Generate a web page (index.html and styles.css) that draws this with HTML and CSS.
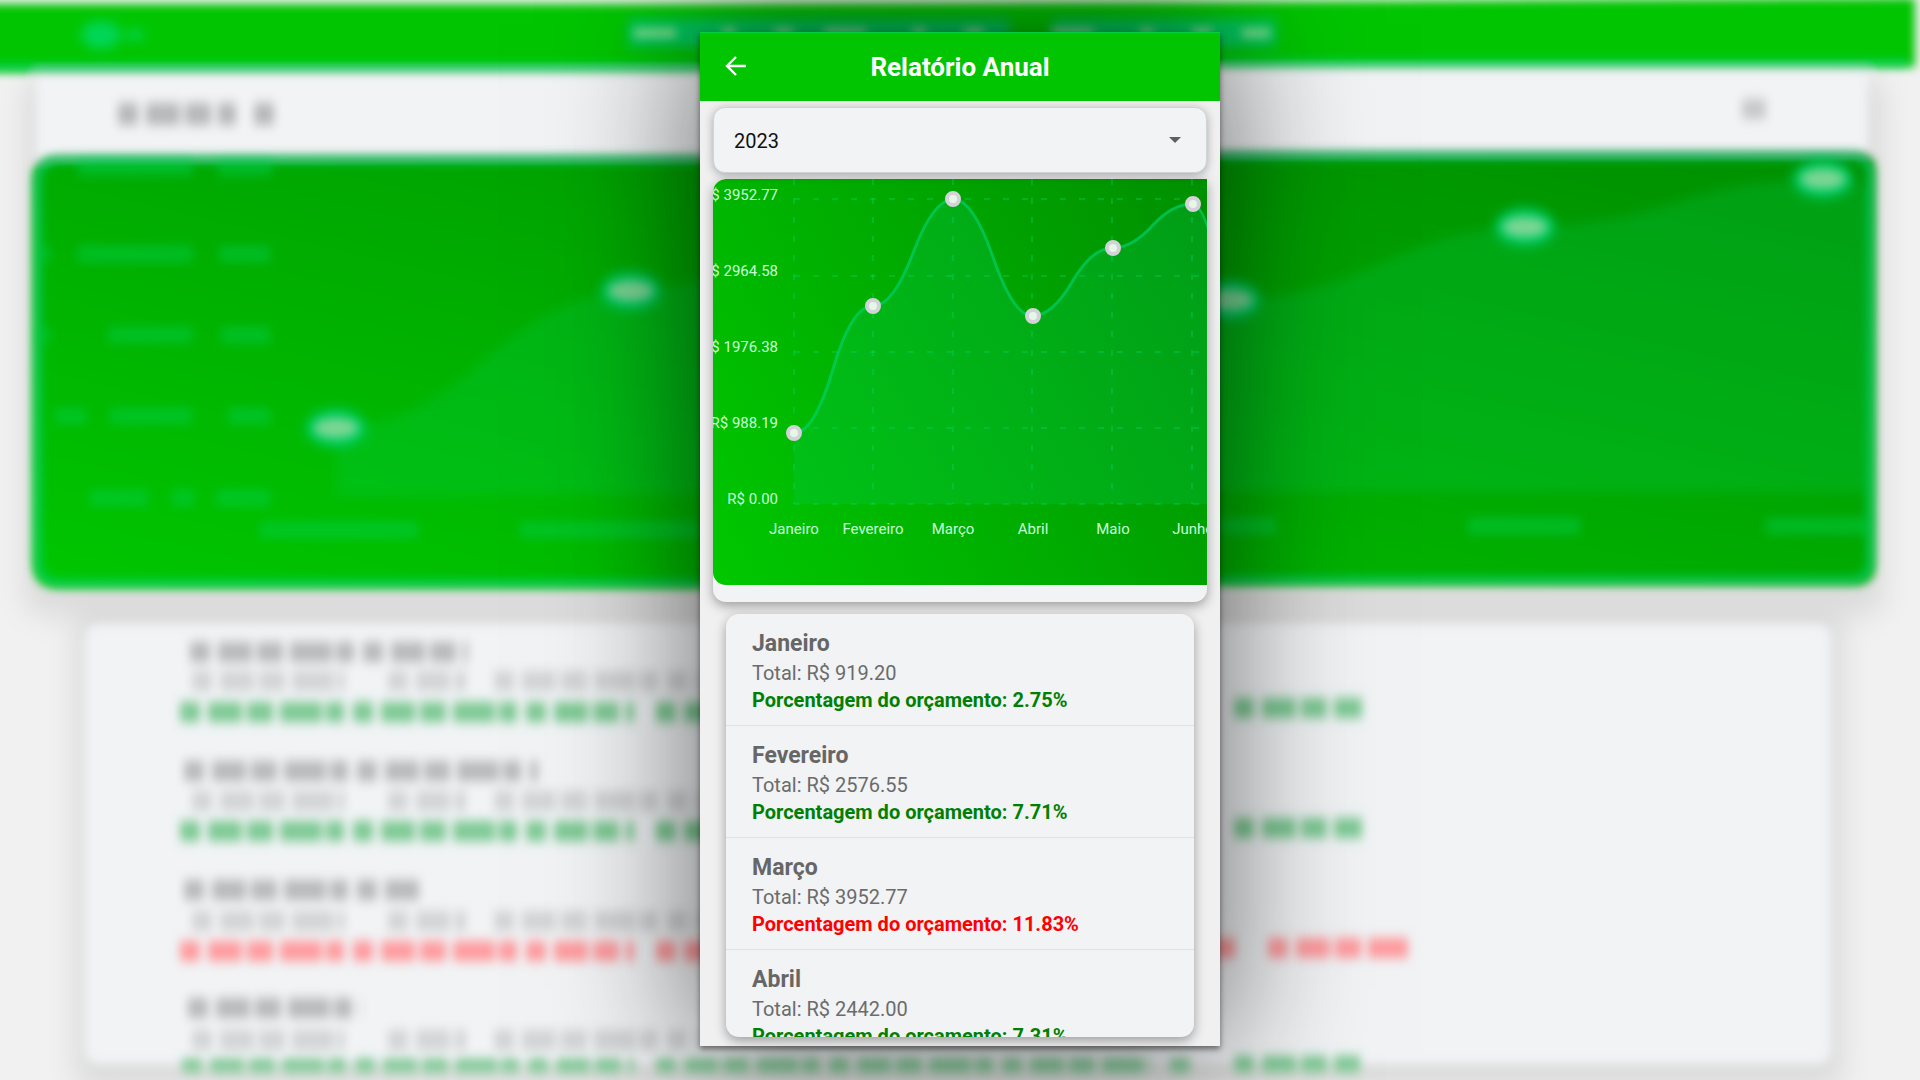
FILE: index.html
```html
<!DOCTYPE html>
<html lang="pt-BR">

<head>
  <meta charset="UTF-8">
  <meta name="viewport" content="width=device-width, initial-scale=1.0">
  <title>Relatório Anual</title>
  <link rel="stylesheet" href="styles.css">
</head>

<body>
  <!-- blurred backdrop -->
  <svg class="backdrop" viewBox="0 0 1920 1080" preserveAspectRatio="xMidYMid slice" aria-hidden="true">
    <defs>
      <linearGradient id="bgGreen" x1="0" y1="1" x2="1" y2="0">
        <stop offset="0" stop-color="#00c600" />
        <stop offset="1" stop-color="#008f00" />
      </linearGradient>
      <filter id="soft" x="-5%" y="-5%" width="110%" height="110%">
        <feGaussianBlur stdDeviation="5" />
      </filter>
      <filter id="softer" x="-5%" y="-5%" width="110%" height="110%">
        <feGaussianBlur stdDeviation="14" />
      </filter>
      <filter id="glow" x="-5%" y="-30%" width="110%" height="160%">
        <feGaussianBlur stdDeviation="6" />
      </filter>
      <filter id="words" x="-5%" y="-5%" width="110%" height="110%">
        <feGaussianBlur stdDeviation="5 6" />
      </filter>
      <clipPath id="listClip">
        <rect width="1920" height="1072" />
      </clipPath>
    </defs>
    <rect width="1920" height="1080" fill="#f1f1f1" />
    <g filter="url(#softer)" fill="#dcdcdc">
      <rect x="24" y="76" width="1860" height="540" rx="20" />
      <rect x="74" y="610" width="1770" height="480" rx="20" />
    </g>
    <g filter="url(#soft)">
      <path class="bg-card" d="M36 70H1868V160H36z" />
      <rect class="bg-card" x="85" y="624" width="1746" height="440" rx="14" />
      <path class="bg-header" d="M-20 4H700L1220 2L1915 -2V67H1220L700 72H-20z" />
      <path class="bg-chart" d="M58 155H700L1220 151H1855Q1875 151 1875 171V565Q1875 585 1855 585H1220L700 588H58Q33 588 33 563V180Q33 155 58 155z" />
    </g>
    <g filter="url(#glow)">
      <path class="bg-area" d="M336 496V428Q410 428 484 360T631 291Q705 291 779 236T927 180Q1000 180 1078 240T1230 300Q1304 300 1378 264T1525 227Q1600 227 1674 203T1823 179L1868 184V492L1220 492z" />
    </g>
    <g class="bg-edge" filter="url(#soft)">
      <path d="M-20 67H700M1220 63H1908" />
      <path d="M60 160H700M1220 156H1850Q1870 156 1870 176V560Q1870 580 1850 580H1220M700 583H62Q38 583 38 560V182Q38 160 60 160" />
    </g>
    <g class="bg-labels" filter="url(#soft)">
      <path d="M78 168H192M218 168H272M42 254H50M78 254H192M220 254H270M42 335H50M108 335H192M222 335H270M55 416H86M110 416H192M228 416H270M90 498H148M172 498H194M216 498H270" />
      <path d="M260 530H418M520 530H700M1220 526H1276M1468 526H1580M1766 526H1868" />
    </g>
    <g class="bg-halo" filter="url(#glow)">
      <ellipse cx="336" cy="428" rx="30" ry="19" />
      <ellipse cx="631" cy="291" rx="30" ry="19" />
      <ellipse cx="1230" cy="300" rx="30" ry="19" />
      <ellipse cx="1525" cy="227" rx="30" ry="19" />
      <ellipse cx="1823" cy="179" rx="30" ry="19" />
      <ellipse class="bg-back" cx="101" cy="35" rx="20" ry="14" />
      <ellipse class="bg-back" cx="135" cy="35" rx="10" ry="5" />
      <path class="bg-title" d="M628 33H1010M1052 33H1276" />
    </g>
    <g class="bg-dots" filter="url(#soft)">
      <ellipse cx="336" cy="428" rx="22" ry="10" />
      <ellipse cx="631" cy="291" rx="22" ry="10" />
      <ellipse cx="1230" cy="300" rx="22" ry="10" />
      <ellipse cx="1525" cy="227" rx="22" ry="10" />
      <ellipse cx="1823" cy="179" rx="22" ry="10" />
      <path class="bg-title-core" d="M634 33H1000M1052 33H1270" />
    </g>
    <g class="bg-text" filter="url(#words)">
      <path class="bg-year" d="M118 114H236M254 114H278" />
      <path class="bg-caret" d="M1742 109H1766" />
      <path class="bg-month" d="M190 652H468M184 771H538M184 890H420M188 1008H362" />
      <path class="bg-total" d="M192 681H345M388 681H466M494 681H700M192 801H345M388 801H466M494 801H700M192 921H345M388 921H466M494 921H700M192 1040H345M388 1040H466M494 1040H700" />
      <g clip-path="url(#listClip)">
        <path class="bg-ok" d="M180 712H634M656 712H710M1234 708H1362M180 831H634M656 831H710M1234 828H1362M182 1069H634M656 1069H1150M1170 1069H1190M1234 1066H1360" />
        <path class="bg-over" d="M180 951H634M656 951H710M1215 948H1240M1268 948H1408" />
      </g>
    </g>
  </svg>

  <div class="phone">
    <header class="topbar">
      <button type="button" class="back" aria-label="Voltar">
        <svg width="24" height="24" viewBox="0 0 24 24">
          <path d="M23 11H4M13 2L4 11L13 20" />
        </svg>
      </button>
      <h1>Relatório Anual</h1>
    </header>

    <main>
      <div class="year">
        <select id="year" aria-label="Ano">
          <option>2023</option>
          <option>2022</option>
        </select>
        <svg class="caret" width="12" height="6" viewBox="0 0 12 6">
          <path d="M0 0H12L6 6z" />
        </svg>
      </div>

      <div class="chart">
        <svg viewBox="0 0 494 406" role="img" aria-label="Gastos por mês">
          <defs>
            <linearGradient id="green" gradientUnits="userSpaceOnUse" x1="0" y1="406" x2="690" y2="0">
              <stop offset="0" stop-color="#00c800" />
              <stop offset="1" stop-color="#008000" />
            </linearGradient>
          </defs>
          <rect width="520" height="406" rx="13" fill="url(#green)" />
          <g class="grid">
            <path d="M81 20H494M81 97H494M81 173H494M81 249H494M81 325H494" />
            <path d="M81 0V325M160 0V325M240 0V325M319 0V325M399 0V325M479 0V325" />
          </g>
          <path class="area" d="M81 325V254Q101 254 120 190T160 127Q180 127 200 74T240 20Q260 20 280 78T319 137Q339 137 359 103T399 69Q419 69 439 47T479 25Q499 25 519 175V325z" />
          <path class="line" d="M81 254Q101 254 120 190T160 127Q180 127 200 74T240 20Q260 20 280 78T319 137Q339 137 359 103T399 69Q419 69 439 47T479 25Q499 25 519 175" />
          <g class="dots">
            <circle cx="81" cy="254" r="6" />
            <circle cx="160" cy="127" r="6" />
            <circle cx="240" cy="20" r="6" />
            <circle cx="320" cy="137" r="6" />
            <circle cx="400" cy="69" r="6" />
            <circle cx="480" cy="25" r="6" />
          </g>
          <g class="labels values">
            <text x="65" y="21">R$ 3952.77</text>
            <text x="65" y="97">R$ 2964.58</text>
            <text x="65" y="173">R$ 1976.38</text>
            <text x="65" y="249">R$ 988.19</text>
            <text x="65" y="325">R$ 0.00</text>
          </g>
          <g class="labels months">
            <text x="81" y="355">Janeiro</text>
            <text x="160" y="355">Fevereiro</text>
            <text x="240" y="355">Março</text>
            <text x="320" y="355">Abril</text>
            <text x="400" y="355">Maio</text>
            <text x="480" y="355">Junho</text>
          </g>
        </svg>
      </div>

      <ul class="list">
        <li>
          <h2>Janeiro</h2>
          <p>Total: R$ 919.20</p>
          <p class="ok">Porcentagem do orçamento: 2.75%</p>
        </li>
        <li>
          <h2>Fevereiro</h2>
          <p>Total: R$ 2576.55</p>
          <p class="ok">Porcentagem do orçamento: 7.71%</p>
        </li>
        <li>
          <h2>Março</h2>
          <p>Total: R$ 3952.77</p>
          <p class="over">Porcentagem do orçamento: 11.83%</p>
        </li>
        <li>
          <h2>Abril</h2>
          <p>Total: R$ 2442.00</p>
          <p class="ok">Porcentagem do orçamento: 7.31%</p>
        </li>
      </ul>
    </main>
  </div>
</body>

</html>
```
FILE: styles.css
```css
* {
  box-sizing: border-box;
}

body {
  margin: 0;
  height: 100vh;
  padding: 32px 0 34px;
  display: flex;
  justify-content: center;
  overflow: hidden;
  font-family: Roboto, "Liberation Sans", sans-serif;
  background: #f1f1f1;
}

h1,
h2,
p,
ul {
  margin: 0;
  padding: 0;
}

/* backdrop */
.backdrop {
  position: absolute;
  inset: 0;
  width: 100%;
  height: 100%;
}

.bg-card {
  fill: #f1f3f5;
}

.bg-header {
  fill: #00c500;
}

.bg-chart {
  fill: url(#bgGreen);
}

.bg-area {
  fill: #00d25f;
  fill-opacity: .22;
}

.bg-edge {
  fill: none;
  stroke: #00d478;
  stroke-width: 7;
  stroke-opacity: .7;
}

.bg-labels {
  fill: none;
  stroke: #00d25a;
  stroke-width: 17;
  stroke-opacity: .4;
}

.bg-halo {
  fill: #00cf6c;
  fill-opacity: .9;
}

.bg-halo .bg-back {
  fill: #00d860;
}

.bg-dots {
  fill: #98d8a0;
  fill-opacity: .8;
}

.bg-title {
  fill: none;
  stroke: #00c56c;
  stroke-width: 28;
  stroke-opacity: .85;
}

.bg-title-core {
  fill: none;
  stroke: #7ddf8c;
  stroke-width: 9;
  stroke-dasharray: 42 46 14 38 20 30;
}

.bg-text path {
  fill: none;
  stroke-width: 20;
  stroke-dasharray: 20 8 34 5 26 7 42 4 18 9;
}

.bg-text .bg-year {
  stroke: #b8b8ba;
  stroke-width: 22;
}

.bg-text .bg-caret {
  stroke: #c8c8ca;
  stroke-dasharray: none;
}

.bg-text .bg-month {
  stroke: #b8b9bb;
}

.bg-text .bg-total {
  stroke: #d2d4d6;
}

.bg-text .bg-ok {
  stroke: #7cc993;
}

.bg-text .bg-over {
  stroke: #ff9a9d;
}

/* phone */
.phone {
  position: relative;
  width: 100%;
  max-width: 520px;
  display: flex;
  flex-direction: column;
  background: #f0f0f0;
  box-shadow: 0 3px 6px rgba(0, 0, 0, .5), 0 0 130px 8px rgba(0, 0, 0, .55);
}

.topbar {
  flex: none;
  height: 69px;
  padding: 0 23px;
  display: grid;
  grid-template-columns: 24px 1fr 24px;
  align-items: center;
  background: #00c500;
  border-top: 1px solid #00d040;
  color: #fff;
}

.topbar h1 {
  font-size: 26px;
  line-height: 32px;
  font-weight: 700;
  text-align: center;
}

.back {
  display: flex;
  padding: 0;
  border: 0;
  background: none;
  cursor: pointer;
}

.back path {
  fill: none;
  stroke: #fff;
  stroke-width: 2.4;
}

main {
  flex: 1;
  min-height: 0;
  padding: 6px 13px 9px;
  display: flex;
  flex-direction: column;
  overflow: hidden;
}

.year {
  flex: none;
  position: relative;
  margin-bottom: 6px;
}

.year select {
  appearance: none;
  display: block;
  width: 100%;
  height: 66px;
  padding: 2px 20px 0;
  border: 1px solid #cdd5d8;
  border-radius: 12px;
  background: #f1f3f5;
  box-shadow: 0 2px 10px rgba(0, 0, 0, .3);
  color: #111;
  font: 20px Roboto, "Liberation Sans", sans-serif;
}

.caret {
  position: absolute;
  right: 26px;
  top: 30px;
  fill: #5f5f60;
  pointer-events: none;
}

.chart {
  flex: none;
  padding-bottom: 17px;
  margin-bottom: 12px;
  border-radius: 13px 0 13px 13px;
  background: #f1f3f5;
  box-shadow: 0 4px 12px rgba(0, 0, 0, .35);
}

.chart svg {
  display: block;
  width: 100%;
  border-top-left-radius: 13px;
}

.grid path {
  fill: none;
  stroke: #00e080;
  stroke-opacity: .6;
  stroke-dasharray: 6 13;
}

.area {
  fill: #00d26e;
  fill-opacity: .2;
}

.line {
  fill: none;
  stroke: #00d26e;
  stroke-opacity: .65;
  stroke-width: 3;
}

.dots circle {
  fill: #e6f7e8;
  stroke: #d2d2d8;
  stroke-width: 4;
}

.labels {
  font-size: 15px;
  fill: #c8ffd8;
}

.values {
  text-anchor: end;
}

.months {
  text-anchor: middle;
}

.list {
  flex: 1;
  min-height: 0;
  margin: 0 13px;
  overflow: hidden;
  list-style: none;
  border-radius: 13px;
  background: #f1f3f5;
  box-shadow: 0 4px 12px rgba(0, 0, 0, .35);
}

.list li {
  padding: 16px 26px 11px;
  border-bottom: 1px solid #dfe1e3;
}

.list h2 {
  margin-bottom: 2px;
  font-size: 23px;
  line-height: 28px;
  font-weight: 700;
  color: #666;
}

.list p {
  font-size: 20px;
  line-height: 27px;
  color: #6b6b6b;
}

.list .ok,
.list .over {
  font-weight: 700;
}

.list .ok {
  color: #008000;
}

.list .over {
  color: #f00;
}
```
